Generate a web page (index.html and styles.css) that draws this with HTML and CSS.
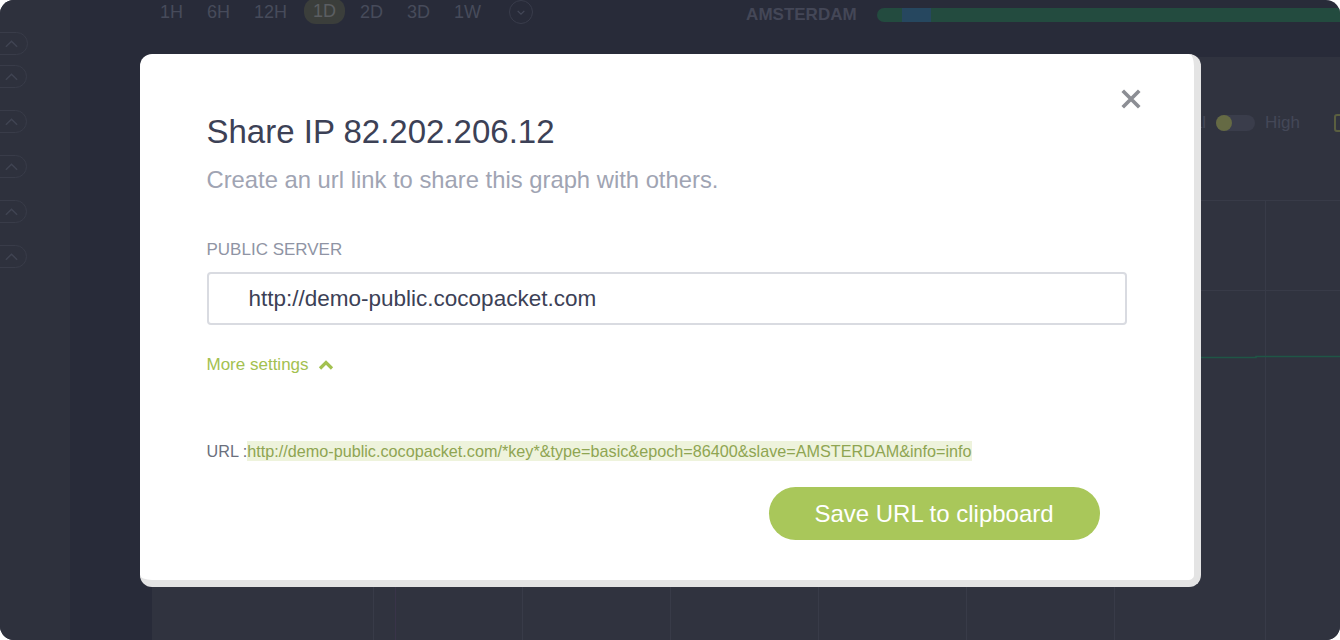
FILE: index.html
```html
<!DOCTYPE html>
<html lang="en">
<head>
  <meta charset="UTF-8">
  <meta name="viewport" content="width=device-width, initial-scale=1.0">
  <title>Share IP</title>
  <link rel="stylesheet" href="styles.css">
</head>
<body>
  <div class="app">
    <aside class="sidebar">
      <div class="side-pill side-pill-first"><svg viewBox="0 0 16 10"><path d="M2 8 L8 2 L14 8"/></svg></div>
      <div class="side-pill"><svg viewBox="0 0 16 10"><path d="M2 8 L8 2 L14 8"/></svg></div>
      <div class="side-pill"><svg viewBox="0 0 16 10"><path d="M2 8 L8 2 L14 8"/></svg></div>
      <div class="side-pill"><svg viewBox="0 0 16 10"><path d="M2 8 L8 2 L14 8"/></svg></div>
      <div class="side-pill"><svg viewBox="0 0 16 10"><path d="M2 8 L8 2 L14 8"/></svg></div>
      <div class="side-pill"><svg viewBox="0 0 16 10"><path d="M2 8 L8 2 L14 8"/></svg></div>
    </aside>

    <div class="workspace">
      <header class="topbar">
        <div class="ranges">
          <span class="range">1H</span>
          <span class="range">6H</span>
          <span class="range">12H</span>
          <span class="range active">1D</span>
          <span class="range">2D</span>
          <span class="range">3D</span>
          <span class="range">1W</span>
          <span class="range-more"><svg viewBox="0 0 12 8"><path d="M2 2 L6 6 L10 2"/></svg></span>
        </div>
        <div class="location">
          <span class="location-name">AMSTERDAM</span>
          <div class="location-bar"><span class="location-seg"></span></div>
        </div>
      </header>

      <div class="workspace-body">
        <div class="gutter"></div>
        <main class="panel">
          <div class="panel-tools">
            <span class="tool-text">Normal</span>
            <span class="toggle"><span class="toggle-knob"></span></span>
            <span class="tool-text">High</span>
            <span class="tool-icon"></span>
          </div>
          <svg class="chart" viewBox="0 0 1188 440" preserveAspectRatio="none">
            <g class="grid">
              <line x1="0" y1="0.5" x2="1188" y2="0.5"/>
              <line x1="0" y1="90.5" x2="1188" y2="90.5"/>
              <line x1="221.5" y1="0" x2="221.5" y2="440"/>
              <line x1="370.5" y1="0" x2="370.5" y2="440"/>
              <line x1="518.5" y1="0" x2="518.5" y2="440"/>
              <line x1="666.5" y1="0" x2="666.5" y2="440"/>
              <line x1="814.5" y1="0" x2="814.5" y2="440"/>
              <line x1="962.5" y1="0" x2="962.5" y2="440"/>
              <line x1="1113.5" y1="0" x2="1113.5" y2="440"/>
            </g>
            <line class="grid-mark" x1="243.5" y1="0" x2="243.5" y2="440"/>
            <path class="series" d="M0 157.5 L1104 157.5 L1104 156.5 L1188 156.5"/>
          </svg>
        </main>
      </div>
    </div>

    <div class="overlay">
      <div class="modal">
        <button class="modal-close" aria-label="Close">
          <svg viewBox="0 0 24 24"><path d="M3 3 L21 21 M21 3 L3 21"/></svg>
        </button>
        <h1 class="modal-title">Share IP 82.202.206.12</h1>
        <p class="modal-sub">Create an url link to share this graph with others.</p>

        <label class="field-label" for="server">PUBLIC SERVER</label>
        <input class="field-input" id="server" type="text" value="http://demo-public.cocopacket.com" readonly>

        <div class="more-settings">
          More settings
          <svg viewBox="0 0 16 10"><path d="M2 8.5 L8 2.5 L14 8.5"/></svg>
        </div>

        <div class="url-line">URL :<span class="url-value">http://demo-public.cocopacket.com/*key*&amp;type=basic&amp;epoch=86400&amp;slave=AMSTERDAM&amp;info=info</span></div>

        <div class="modal-actions">
          <button class="btn-save">Save URL to clipboard</button>
        </div>
      </div>
    </div>
  </div>
</body>
</html>
```

FILE: styles.css
```css
html, body {
  margin: 0;
  padding: 0;
  background: #fff;
}
body {
  font-family: "Liberation Sans", Arial, sans-serif;
}
.app {
  position: relative;
  display: flex;
  width: 1340px;
  height: 640px;
  border-radius: 14px;
  overflow: hidden;
  background: #282b39;
}

/* Sidebar */
.sidebar {
  width: 70px;
  flex-shrink: 0;
  background: #2e313d;
  display: flex;
  flex-direction: column;
  gap: 22px;
  padding-top: 32px;
}
.side-pill {
  width: 41px;
  height: 23px;
  margin-left: -14px;
  border: 1px solid #393c49;
  border-radius: 12px;
  display: flex;
  align-items: center;
  padding-left: 17px;
  box-sizing: border-box;
}
.side-pill-first {
  margin-bottom: -12px;
  width: 42px;
}
.side-pill svg {
  width: 15px;
  height: 10px;
  fill: none;
  stroke: #404452;
  stroke-width: 1.6;
}

/* Workspace */
.workspace {
  flex: 1;
  display: flex;
  flex-direction: column;
  min-width: 0;
}
.topbar {
  height: 57px;
  flex-shrink: 0;
  display: flex;
  align-items: flex-start;
  padding-left: 81px;
}
.ranges {
  display: flex;
  align-items: center;
  gap: 6px;
}
.range {
  font-size: 18px;
  line-height: 24px;
  padding: 0 9px;
  color: #474b5b;
}
.range.active {
  background: #3b3e3b;
  color: #5b5e62;
  border-radius: 12px;
  margin: -2px 0 0 2px;
  padding-top: 1px;
  padding-bottom: 1px;
}
.range-more {
  width: 22px;
  height: 22px;
  margin-left: 13px;
  border: 1.5px solid #393c4b;
  border-radius: 50%;
  display: flex;
  align-items: center;
  justify-content: center;
}
.range-more svg {
  width: 10px;
  height: 7px;
  fill: none;
  stroke: #444858;
  stroke-width: 1.5;
}
.location {
  flex: 1;
  display: flex;
  align-items: center;
  gap: 20px;
  margin-left: 213px;
  margin-right: -30px;
  padding-top: 5px;
}
.location-name {
  font-size: 17px;
  font-weight: bold;
  color: #444757;
}
.location-bar {
  flex: 1;
  height: 14px;
  border-radius: 7px;
  background: #234b3f;
  padding-left: 25px;
}
.location-seg {
  display: block;
  width: 29px;
  height: 14px;
  background: #26475f;
}
.workspace-body {
  flex: 1;
  display: flex;
}
.gutter {
  width: 82px;
  flex-shrink: 0;
}
.panel {
  flex: 1;
  background: #30333f;
  display: flex;
  flex-direction: column;
}
.panel-tools {
  display: flex;
  align-items: center;
  justify-content: flex-end;
  gap: 10px;
  margin-top: 56px;
  margin-right: -10px;
  height: 20px;
}
.tool-text {
  font-size: 17px;
  color: #444858;
}
.toggle {
  width: 39px;
  height: 16px;
  border-radius: 8px;
  background: #3a3d4b;
  display: flex;
}
.toggle-knob {
  width: 16px;
  height: 16px;
  border-radius: 50%;
  background: #656a44;
}
.tool-icon {
  width: 12px;
  height: 14px;
  margin-left: 24px;
  border: 2px solid #5a5f40;
  border-radius: 3px;
}
.chart {
  display: block;
  width: 1188px;
  height: 440px;
  margin-top: 67px;
}
.grid line {
  stroke: #383b48;
  stroke-width: 1;
}
.grid-mark {
  stroke: #393449;
  stroke-width: 1;
}
.series {
  fill: none;
  stroke: #1f5646;
  stroke-width: 1.5;
}

/* Modal */
.overlay {
  position: absolute;
  inset: 0;
  display: flex;
  justify-content: center;
  align-items: flex-start;
  padding-top: 54px;
}
.modal {
  position: relative;
  width: 1061px;
  box-sizing: border-box;
  background: #fff;
  border-right: 7px solid #e4e4e4;
  border-bottom: 7px solid #e4e4e4;
  border-radius: 12px;
  padding: 58px 67px 40px;
}
.modal-close {
  position: absolute;
  top: 34px;
  right: 52px;
  width: 22px;
  height: 22px;
  padding: 0;
  border: none;
  background: none;
}
.modal-close svg {
  display: block;
  width: 22px;
  height: 22px;
  fill: none;
  stroke: #8c8e94;
  stroke-width: 4;
}
.modal-title {
  margin: 0;
  font-size: 33px;
  line-height: 40px;
  font-weight: normal;
  color: #3c4156;
}
.modal-sub {
  margin: 13px 0 0;
  font-size: 23.8px;
  line-height: 30px;
  color: #a0a4b3;
}
.field-label {
  display: block;
  margin-top: 45px;
  font-size: 17px;
  line-height: 20px;
  color: #8f94a4;
}
.field-input {
  display: block;
  box-sizing: border-box;
  width: 100%;
  height: 53px;
  margin-top: 12px;
  padding: 0 0 0 40px;
  border: 2px solid #d9dbe1;
  border-radius: 4px;
  font-family: "Liberation Sans", Arial, sans-serif;
  font-size: 22.5px;
  color: #3c4156;
  outline: none;
}
.more-settings {
  display: flex;
  align-items: center;
  gap: 9px;
  margin-top: 30px;
  font-size: 17px;
  line-height: 20px;
  color: #a3c150;
}
.more-settings svg {
  width: 16px;
  height: 10px;
  fill: none;
  stroke: #a3c150;
  stroke-width: 3.2;
}
.url-line {
  margin-top: 65px;
  font-size: 16.2px;
  line-height: 22px;
  color: #6b6f7d;
}
.url-value {
  background: #eef3dc;
  color: #8fa552;
  padding: 1px 0;
}
.modal-actions {
  display: flex;
  justify-content: flex-end;
  margin-top: 25px;
  padding-right: 27px;
}
.btn-save {
  width: 331px;
  height: 53px;
  border: none;
  border-radius: 27px;
  background: #a9c75a;
  color: #fff;
  font-family: "Liberation Sans", Arial, sans-serif;
  font-size: 24px;
}
```
